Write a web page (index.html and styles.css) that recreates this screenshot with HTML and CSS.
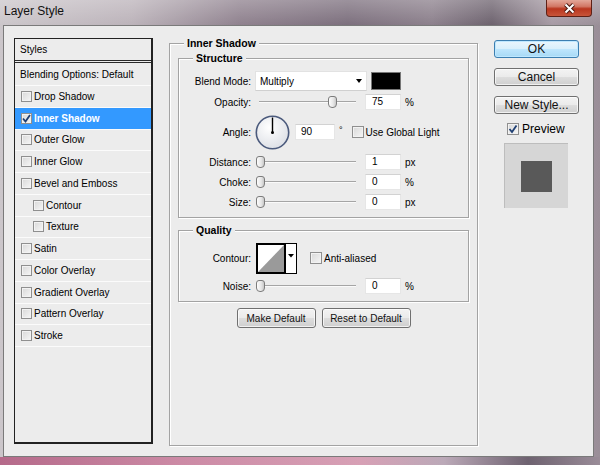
FILE: index.html
```html
<!DOCTYPE html>
<html lang="en">
<head>
    <meta charset="UTF-8">
    <meta name="viewport" content="width=device-width, initial-scale=1.0">
    <title>Layer Style</title>
    <link rel="stylesheet" href="styles.css">
</head>
<body>

<div class="window">
    <div class="titlebar">
        <span class="title">Layer Style</span>
        <button class="close-btn" aria-label="Close">
            <svg width="13" height="11" viewBox="0 0 13 11">
                <path d="M2.5 1.5 L10.5 9.5 M10.5 1.5 L2.5 9.5" stroke="#4a1a12" stroke-width="4"/>
                <path d="M2.5 1.5 L10.5 9.5 M10.5 1.5 L2.5 9.5" stroke="#fff" stroke-width="2"/>
            </svg>
        </button>
    </div>

    <div class="client">
        <!-- left list of effects -->
        <div class="styles-list">
            <div class="list-head">Styles</div>
            <div class="list-row first">Blending Options: Default</div>
            <div class="list-row"><span class="check"></span>Drop Shadow</div>
            <div class="list-row selected">
                <span class="check">
                    <svg width="9" height="9" viewBox="0 0 9 9"><path d="M1 4.5 L3.5 7.5 L8 1" fill="none" stroke="#1f3f73" stroke-width="1.8"/></svg>
                </span>Inner Shadow
            </div>
            <div class="list-row"><span class="check"></span>Outer Glow</div>
            <div class="list-row"><span class="check"></span>Inner Glow</div>
            <div class="list-row"><span class="check"></span>Bevel and Emboss</div>
            <div class="list-row sub"><span class="check"></span>Contour</div>
            <div class="list-row sub"><span class="check"></span>Texture</div>
            <div class="list-row"><span class="check"></span>Satin</div>
            <div class="list-row"><span class="check"></span>Color Overlay</div>
            <div class="list-row"><span class="check"></span>Gradient Overlay</div>
            <div class="list-row"><span class="check"></span>Pattern Overlay</div>
            <div class="list-row"><span class="check"></span>Stroke</div>
        </div>

        <!-- settings -->
        <fieldset class="group main-group">
            <legend>Inner Shadow</legend>

            <fieldset class="group sub-group structure">
                <legend>Structure</legend>
                <div class="field">
                    <span class="field-label">Blend Mode:</span>
                    <div class="select">Multiply<span class="select-arrow"></span></div>
                    <div class="swatch"></div>
                </div>
                <div class="field spaced">
                    <span class="field-label">Opacity:</span>
                    <div class="slider"><div class="thumb" style="left: 69px"></div></div>
                    <div class="num">75</div><span class="unit">%</span>
                </div>
                <div class="field spaced angle-row">
                    <span class="field-label">Angle:</span>
                    <svg class="dial" width="35" height="35" viewBox="0 0 35 35">
                        <defs>
                            <radialGradient id="dialFill" cx="40%" cy="35%" r="70%">
                                <stop offset="0" stop-color="#ffffff"/>
                                <stop offset="1" stop-color="#dcdfe5"/>
                            </radialGradient>
                        </defs>
                        <circle cx="17.5" cy="17.5" r="16.2" fill="url(#dialFill)" stroke="#4b5a7c" stroke-width="1.6"/>
                        <line x1="17.5" y1="17.5" x2="17.5" y2="2.5" stroke="#000" stroke-width="1.4"/>
                        <circle cx="17.5" cy="17.5" r="1.5" fill="#000"/>
                    </svg>
                    <div class="num angle">90</div><span class="unit deg">°</span>
                    <span class="check big global"></span><span class="check-text">Use Global Light</span>
                </div>
                <div class="field spaced">
                    <span class="field-label">Distance:</span>
                    <div class="slider"><div class="thumb" style="left: -3px"></div></div>
                    <div class="num">1</div><span class="unit">px</span>
                </div>
                <div class="field">
                    <span class="field-label">Choke:</span>
                    <div class="slider"><div class="thumb" style="left: -3px"></div></div>
                    <div class="num">0</div><span class="unit">%</span>
                </div>
                <div class="field">
                    <span class="field-label">Size:</span>
                    <div class="slider"><div class="thumb" style="left: -3px"></div></div>
                    <div class="num">0</div><span class="unit">px</span>
                </div>
            </fieldset>

            <fieldset class="group sub-group quality">
                <legend>Quality</legend>
                <div class="field contour-row">
                    <span class="field-label">Contour:</span>
                    <svg class="contour" width="41" height="31" viewBox="0 0 41 31">
                        <rect x="1" y="1" width="28" height="29" fill="#fff"/>
                        <polygon points="2,29 28,2 28,29" fill="#9a9a9a"/>
                        <rect x="1" y="1" width="28" height="29" fill="none" stroke="#000" stroke-width="2"/>
                        <rect x="29.5" y="0.5" width="11" height="30" fill="#fff" stroke="#000"/>
                        <polygon points="32,11 38,11 35,14.5" fill="#000"/>
                    </svg>
                    <span class="check big aa"></span><span class="check-text">Anti-aliased</span>
                </div>
                <div class="field noise-row">
                    <span class="field-label">Noise:</span>
                    <div class="slider"><div class="thumb" style="left: -3px"></div></div>
                    <div class="num">0</div><span class="unit">%</span>
                </div>
            </fieldset>

            <div class="btn-row">
                <button class="btn small">Make Default</button>
                <button class="btn small">Reset to Default</button>
            </div>
        </fieldset>

        <!-- dialog buttons and preview -->
        <div class="actions">
            <button class="btn big default">OK</button>
            <button class="btn big">Cancel</button>
            <button class="btn big">New Style...</button>
            <div class="preview-toggle">
                <span class="check big">
                    <svg width="10" height="10" viewBox="0 0 10 10"><path d="M1.5 5 L4 8 L8.5 1.5" fill="none" stroke="#1f3f73" stroke-width="1.8"/></svg>
                </span>Preview
            </div>
            <div class="preview-box"><div class="preview-swatch"></div></div>
        </div>
    </div>
</div>

</body>
</html>
```

FILE: styles.css
```css
body {
    margin: 0;
    font-family: "Liberation Sans", Arial, sans-serif;
    font-size: 10px;
    color: #000;
}
.window {
    width: 600px;
    height: 465px;
    box-sizing: border-box;
    padding: 0 6px 8px 3px;
    display: flex;
    flex-direction: column;
    background:
        linear-gradient(90deg, #b56a8a 0%, #cc8aa5 30%, #d7a0b5 60%, #bba9b8 74%, #6e6270 88%, #9a8c98 100%) bottom / 100% 8px no-repeat,
        linear-gradient(180deg, rgba(255,255,255,0.25), rgba(255,255,255,0) 26px),
        linear-gradient(90deg, #cbc6ca 0%, #bbb2b9 22%, #8e808d 40%, #7b6e7c 58%, #8b7f8b 72%, #6c616d 82%, #a69aa4 92%, #9a8e98 100%);
}

/* title bar */
.titlebar {
    height: 25px;
    display: flex;
    align-items: flex-start;
}
.title {
    font-size: 12px;
    line-height: 22px;
    padding-left: 1px;
    color: #111;
}
.close-btn {
    margin-left: auto;
    margin-right: 2px;
    width: 46px;
    height: 17px;
    padding: 0;
    border: 1px solid #5e2016;
    border-top: none;
    border-radius: 0 0 4px 4px;
    background: linear-gradient(180deg, #e3a799 0%, #d27866 40%, #b9361f 55%, #c8553a 100%);
    display: flex;
    align-items: center;
    justify-content: center;
}
.close-btn svg {
    display: block;
}

/* dialog body */
.client {
    flex: 1;
    display: flex;
    align-items: flex-start;
    background-color: #ececec;
    border: 1px solid #7a7a7a;
    padding-left: 10px;
}

/* styles list */
.styles-list {
    margin-top: 12px;
    width: 139px;
    height: 406px;
    box-sizing: border-box;
    border: 1px solid #222;
    border-right-width: 2px;
    border-bottom-width: 2px;
}
.list-head {
    height: 21px;
    line-height: 21px;
    padding-left: 5px;
    border-bottom: 3px double #2a2a2a;
}
.list-row {
    height: 21.75px;
    box-sizing: border-box;
    border-bottom: 1px solid #fbfbfb;
    display: flex;
    align-items: center;
    gap: 2px;
    padding-left: 6px;
    white-space: nowrap;
}
.list-row.first {
    height: 23px;
    padding-left: 5px;
}
.list-row.sub {
    padding-left: 18px;
}
.list-row.selected {
    background-color: #3399ff;
    color: #fff;
    font-weight: bold;
}

/* checkboxes */
.check {
    width: 11px;
    height: 11px;
    box-sizing: border-box;
    border: 1px solid #8f8f8f;
    background: linear-gradient(135deg, #d8d8d8 0%, #f6f6f6 100%);
    box-shadow: inset 0 0 0 1px #f2f2f2;
    display: flex;
    align-items: center;
    justify-content: center;
    flex-shrink: 0;
}
.check svg {
    display: block;
}
.check.big {
    width: 12px;
    height: 12px;
}

/* group boxes */
.group {
    margin: 0;
    min-width: 0;
    border: 1px solid #a3a3a3;
    box-shadow: inset 1px 1px 0 #fff, 1px 1px 0 #fff;
}
.group legend {
    font-weight: bold;
    font-size: 10.5px;
    line-height: 14px;
    padding: 0 3px;
    background-color: #ececec;
}
.main-group {
    margin-top: 10px;
    margin-left: 16px;
    width: 309px;
    height: 410px;
    box-sizing: border-box;
    padding: 1px 8px 0 8px;
}
.main-group > legend {
    margin-left: 6px;
}
.sub-group {
    padding: 6px 0 5px 0;
}
.sub-group > legend {
    margin-left: 14px;
}
.quality {
    margin-top: 5px;
}

/* setting rows */
.field {
    display: flex;
    align-items: center;
    height: 20px;
}
.field.spaced {
    margin-top: 1px;
}
.field-label {
    width: 72px;
    margin-right: 4px;
    text-align: right;
    white-space: nowrap;
}
.angle-row {
    height: 38px;
}
.contour-row {
    height: 30px;
}
.noise-row {
    margin-top: 3px;
}
.select {
    width: 112px;
    height: 20px;
    box-sizing: border-box;
    background-color: #fff;
    border: 1px solid #e2e2e2;
    border-bottom-color: #d0d0d0;
    padding-left: 4px;
    display: flex;
    align-items: center;
}
.select-arrow {
    margin-left: auto;
    margin-right: 4px;
    width: 0;
    height: 0;
    border-left: 3.5px solid transparent;
    border-right: 3.5px solid transparent;
    border-top: 4px solid #000;
}
.swatch {
    margin-left: 4px;
    width: 30px;
    height: 18px;
    box-sizing: border-box;
    background-color: #000;
    border: 1px solid #777;
}
.slider {
    position: relative;
    margin-left: 4px;
    width: 97px;
    height: 12px;
}
.slider::before {
    content: "";
    position: absolute;
    left: 0;
    right: 0;
    top: 5px;
    height: 1px;
    background-color: #a5a5a5;
    border-bottom: 1px solid #fafafa;
}
.thumb {
    position: absolute;
    top: 0;
    width: 9px;
    height: 12px;
    box-sizing: border-box;
    border: 1px solid #7c7c7c;
    border-radius: 3px 3px 4px 4px;
    background: linear-gradient(90deg, #fdfdfd 0%, #e6e6e6 60%, #c8c8c8 100%);
}
.num {
    margin-left: 9px;
    width: 36px;
    height: 16px;
    box-sizing: border-box;
    background-color: #fff;
    border: 1px solid #e6e6e6;
    border-top-color: #d2d2d2;
    padding-left: 6px;
    line-height: 14px;
}
.num.angle {
    margin-left: 5px;
    width: 40px;
    padding-left: 5px;
}
.unit {
    margin-left: 4px;
}
.unit.deg {
    align-self: flex-start;
    margin-top: 12px;
    font-size: 9px;
}
.dial {
    display: block;
}
.check.global {
    margin-left: 9px;
}
.check-text {
    margin-left: 2px;
    white-space: nowrap;
}
.contour {
    display: block;
    margin-left: 1px;
}
.check.aa {
    margin-left: 13px;
}

/* buttons */
.btn {
    font-family: "Liberation Sans", Arial, sans-serif;
    color: #111;
    padding: 0;
    border: 1px solid #707070;
    border-radius: 3px;
    background: linear-gradient(180deg, #f3f3f3 0%, #ebebeb 48%, #dddddd 52%, #cfcfcf 100%);
    box-shadow: inset 0 0 0 1px rgba(255,255,255,0.7);
}
.btn-row {
    display: flex;
    justify-content: center;
    gap: 6px;
    margin-top: 6px;
}
.btn.small {
    height: 20px;
    font-size: 10px;
}
.btn-row .btn:first-child {
    width: 79px;
}
.btn-row .btn:last-child {
    width: 89px;
}
.actions {
    margin-top: 14px;
    margin-left: 16px;
    width: 85px;
    display: flex;
    flex-direction: column;
}
.btn.big {
    width: 85px;
    height: 18px;
    font-size: 12px;
    line-height: 14px;
    margin-bottom: 10px;
}
.btn.default {
    border-color: #3c7fb1;
    background: linear-gradient(180deg, #eaf6fd 0%, #d9f0fc 48%, #bee6fd 52%, #a7d9f5 100%);
    box-shadow: inset 0 0 0 1px #bfe8ff;
}
.preview-toggle {
    display: flex;
    align-items: center;
    gap: 3px;
    padding-left: 13px;
    font-size: 12px;
    height: 12px;
    margin-top: -1px;
}
.preview-box {
    margin-top: 8px;
    margin-left: 10px;
    width: 64px;
    height: 65px;
    box-sizing: border-box;
    background-color: #d6d6d6;
    border-top: 1px solid #bdbdbd;
    border-left: 1px solid #bdbdbd;
    display: flex;
    align-items: center;
    justify-content: center;
}
.preview-swatch {
    width: 31px;
    height: 31px;
    background-color: #595959;
}
```
